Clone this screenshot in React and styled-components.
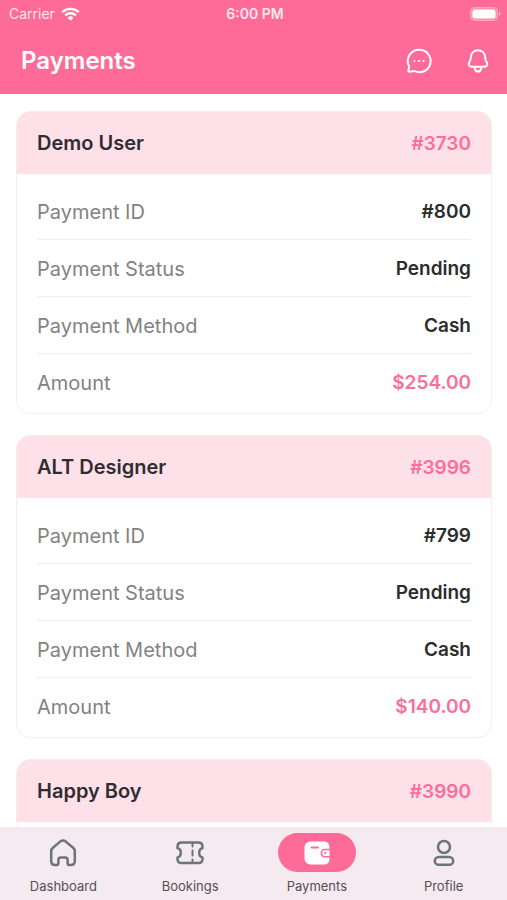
import React from "react";
import styled, { createGlobalStyle } from "styled-components";

const GlobalStyle = createGlobalStyle`
  * {
    box-sizing: border-box;
  }
  body {
    margin: 0;
    background-color: white;
    font-family: Inter, "Liberation Sans", sans-serif;
  }
`;

const Container = styled.div`
  display: flex;
  flex-direction: column;
  height: 100vh;
`;

const Header = styled.header`
  background-color: #ff6b98;
  color: white;
`;

const StatusBar = styled.div`
  display: grid;
  grid-template-columns: 1fr auto 1fr;
  align-items: center;
  height: 27px;
  padding: 0 6px 0 9px;
  font-size: 14px;
  color: #ffe6ee;
`;

const Carrier = styled.div`
  display: flex;
  align-items: center;
  gap: 6px;
`;

const Time = styled.span`
  font-weight: 600;
`;

const BatteryIcon = styled.svg`
  justify-self: end;
`;

const TitleBar = styled.div`
  display: flex;
  align-items: center;
  justify-content: space-between;
  height: 67px;
  padding: 0 14px 0 21px;
`;

const Title = styled.h1`
  margin: 0;
  font-size: 24px;
  font-weight: 600;
`;

const Actions = styled.div`
  display: flex;
  gap: 29px;
`;

const IconButton = styled.button`
  display: flex;
  padding: 0;
  border: none;
  background: none;
  color: white;
  cursor: pointer;
`;

const List = styled.main`
  flex: 1;
  min-height: 0;
  display: flex;
  flex-direction: column;
  gap: 21px;
  padding: 17px 15px 17px 16px;
  overflow-y: auto;
  scrollbar-width: none;
`;

const Card = styled.article`
  flex-shrink: 0;
  border: 1px solid #f0eff0;
  border-radius: 14px;
  background-color: white;
  overflow: hidden;
`;

const CardHeader = styled.div`
  display: flex;
  align-items: center;
  justify-content: space-between;
  height: 62px;
  padding: 0 20px;
  background-color: #fee0e9;
`;

const Name = styled.h2`
  margin: 0;
  font-size: 20px;
  font-weight: 600;
  color: #302c30;
`;

const BookingId = styled.a`
  font-size: 19px;
  font-weight: 600;
  color: #fb6e99;
  text-decoration: none;
`;

const Details = styled.dl`
  margin: 0;
  padding: 9px 20px 3px;
`;

const Row = styled.div`
  display: flex;
  justify-content: space-between;
  padding: 17px 0 15px;
  border-bottom: 1px solid #efefef;
  line-height: 24px;

  &:last-child {
    border-bottom: none;
  }
`;

const Label = styled.dt`
  font-size: 20px;
  color: #828282;
`;

const Value = styled.dd`
  margin: 0;
  font-size: 19px;
  font-weight: 600;
  color: ${(props) => (props.$accent ? "#fb6e99" : "#2b2d2d")};
`;

const BottomNav = styled.nav`
  display: grid;
  grid-template-columns: repeat(4, 1fr);
  padding: 6px 0;
  background-color: #f5eaef;
`;

const NavItem = styled.a`
  display: flex;
  flex-direction: column;
  align-items: center;
  gap: 6px;
  font-size: 13px;
  line-height: 16px;
  color: #554f55;
  text-decoration: none;
`;

const Pill = styled.span`
  display: flex;
  align-items: center;
  justify-content: center;
  width: 78px;
  height: 39px;
  border-radius: 20px;
  color: ${(props) => (props.$active ? "white" : "#6b7578")};
  background-color: ${(props) => (props.$active ? "#ff6b98" : "transparent")};
`;

const Stroke = ({ width = 2.5, children }) => (
  <svg
    width="30"
    height="30"
    viewBox="0 0 30 30"
    fill="none"
    stroke="currentColor"
    strokeWidth={width}
    strokeLinecap="round"
    strokeLinejoin="round"
    aria-hidden="true"
  >
    {children}
  </svg>
);

const WifiIcon = () => (
  <svg width="19" height="14" viewBox="0 0 19 14" fill="none" stroke="white" strokeWidth="2.4" aria-hidden="true">
    <path d="M1.2 5.2a12 12 0 0 1 16.6 0" />
    <path d="M4.2 8.4a7.6 7.6 0 0 1 10.6 0" />
    <path d="M6.6 10.7a4.2 4.2 0 0 1 5.8 0L9.5 13.7Z" fill="white" stroke="none" />
  </svg>
);

const ChatIcon = () => (
  <Stroke width={2}>
    <path d="M15.400 3.800a11.200 11.200 0 1 1-5.200 21.100c-1.800.4-3.600.8-4.800.8-.9 0-1.300-.6-1-1.500.5-1.400 1-2.600.6-4.100A11.200 11.200 0 0 1 15.400 3.800Z" />
    <path d="M10.500 15h.1M15 15h.1M19.500 15h.1" />
  </Stroke>
);

const BellIcon = () => (
  <Stroke width={2}>
    <path d="M15 4.200c-4 0-7 3-7.100 6.600-.1 3.100-.6 4-1.800 5.900-1.200 2.200.2 4 3.200 4h11.400c3 0 4.400-1.800 3.200-4-1.200-1.900-1.700-2.800-1.800-5.900C22 7.200 19 4.200 15 4.200Z" />
    <path d="M11.600 21.500c.4 2.700 1.600 4.100 3.400 4.100s3-1.400 3.400-4.100" />
  </Stroke>
);

const HomeIcon = () => (
  <Stroke>
    <path d="M3.200 13.200c0-1.700.5-2.500 1.700-3.500l7.300-6.100c1.900-1.500 3.700-1.500 5.600 0l7.300 6.100c1.200 1 1.700 1.800 1.700 3.500v9.900c0 2.800-1.100 4-3.900 4h-1.100c-1.500 0-2.200-.7-2.200-2.200v-3.200c0-1.500-.8-2.300-2.300-2.300h-4.600c-1.500 0-2.300.8-2.300 2.300v3.200c0 1.500-.7 2.200-2.200 2.200H7.100c-2.800 0-3.900-1.200-3.900-4Z" />
  </Stroke>
);

const TicketIcon = () => (
  <Stroke>
    <path d="M6.700 4.500h16.600c3 0 4.200 1.200 4.200 4.200v1.500c-1.600.2-3.300 1.900-3.300 4.600s1.700 4.400 3.300 4.600v1.500c0 3-1.200 4.200-4.200 4.200H6.700c-3 0-4.200-1.200-4.200-4.200v-1.500c1.600-.2 3.300-1.900 3.300-4.600s-1.700-4.400-3.300-4.600V8.700c0-3 1.200-4.200 4.200-4.200Z" />
    <path d="M17.500 5v3.500M17.500 12.500v5M17.500 21.500V24.500" strokeWidth="2" />
  </Stroke>
);

const WalletIcon = () => (
  <svg width="30" height="30" viewBox="0 0 30 30" aria-hidden="true">
    <path
      fill="currentColor"
      d="M9.500 3.500h12c4 0 6 2.200 6 6v1.300h-4.700a4.300 4.300 0 0 0 0 8.600h4.700v1.300c0 3.800-2 5.800-6 5.800h-12c-4.500 0-7-2.300-7-6.500V10c0-4.200 2.500-6.500 7-6.500Z"
    />
    <path fill="currentColor" d="M22.900 12.300h4.600v5.600h-4.600a2.800 2.800 0 0 1 0-5.600Z" />
    <circle cx="23.2" cy="15.100" r="1.100" fill="#ff6b98" />
    <path d="M9.500 9.500h6.500" stroke="#ff6b98" strokeWidth="1.800" strokeLinecap="round" />
  </svg>
);

const ProfileIcon = () => (
  <Stroke>
    <circle cx="15" cy="9" r="6" />
    <rect x="5.800" y="19" width="18.400" height="7.800" rx="3.900" />
  </Stroke>
);

const payments = [
  {
    name: "Demo User",
    booking: "#3730",
    rows: [
      ["Payment ID", "#800"],
      ["Payment Status", "Pending"],
      ["Payment Method", "Cash"],
      ["Amount", "$254.00"],
    ],
  },
  {
    name: "ALT Designer",
    booking: "#3996",
    rows: [
      ["Payment ID", "#799"],
      ["Payment Status", "Pending"],
      ["Payment Method", "Cash"],
      ["Amount", "$140.00"],
    ],
  },
  { name: "Happy Boy", booking: "#3990", rows: [] },
];

const tabs = [
  { label: "Dashboard", Icon: HomeIcon },
  { label: "Bookings", Icon: TicketIcon },
  { label: "Payments", Icon: WalletIcon, active: true },
  { label: "Profile", Icon: ProfileIcon },
];

function PaymentCard({ item }) {
  return (
    <Card>
      <CardHeader>
        <Name>{item.name}</Name>
        <BookingId href="#">{item.booking}</BookingId>
      </CardHeader>
      <Details>
        {item.rows.map(([label, value]) => (
          <Row key={label}>
            <Label>{label}</Label>
            <Value $accent={label === "Amount"}>{value}</Value>
          </Row>
        ))}
      </Details>
    </Card>
  );
}

function App() {
  return (
    <Container>
      <GlobalStyle />
      <Header>
        <StatusBar>
          <Carrier>
            <span>Carrier</span>
            <WifiIcon />
          </Carrier>
          <Time>6:00 PM</Time>
          <BatteryIcon width="31" height="14" viewBox="0 0 31 14" aria-hidden="true">
            <rect x="0.5" y="0.5" width="27" height="13" rx="4" fill="#ff8fb1" stroke="#ffa6c1" />
            <rect x="2.5" y="2.5" width="23" height="9" rx="2.5" fill="white" />
            <path d="M29 5v4c1-.3 1.500-1 1.500-2S30 5.300 29 5Z" fill="#ffb5cb" />
          </BatteryIcon>
        </StatusBar>
        <TitleBar>
          <Title>Payments</Title>
          <Actions>
            <IconButton aria-label="Messages">
              <ChatIcon />
            </IconButton>
            <IconButton aria-label="Notifications">
              <BellIcon />
            </IconButton>
          </Actions>
        </TitleBar>
      </Header>
      <List>
        {payments.map((item) => (
          <PaymentCard key={item.booking} item={item} />
        ))}
      </List>
      <BottomNav>
        {tabs.map(({ label, Icon, active }) => (
          <NavItem key={label} href="#" aria-current={active ? "page" : undefined}>
            <Pill $active={active}>
              <Icon />
            </Pill>
            {label}
          </NavItem>
        ))}
      </BottomNav>
    </Container>
  );
}

export default App;
